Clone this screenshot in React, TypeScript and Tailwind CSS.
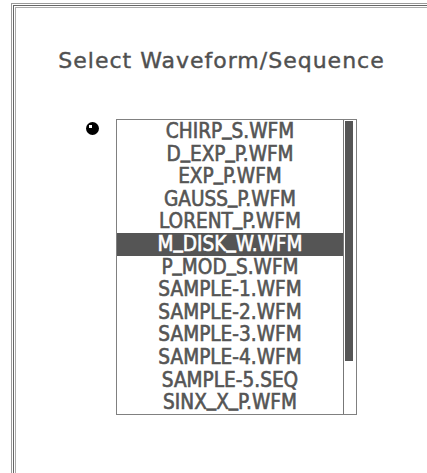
import React from 'react';

const files = [
    'CHIRP_S.WFM',
    'D_EXP_P.WFM',
    'EXP_P.WFM',
    'GAUSS_P.WFM',
    'LORENT_P.WFM',
    'M_DISK_W.WFM',
    'P_MOD_S.WFM',
    'SAMPLE-1.WFM',
    'SAMPLE-2.WFM',
    'SAMPLE-3.WFM',
    'SAMPLE-4.WFM',
    'SAMPLE-5.SEQ',
    'SINX_X_P.WFM',
];

const Bullet = () => (
    <svg width="13" height="13" viewBox="0 0 13 13" className="mt-[3px] shrink-0">
        <circle cx="6.5" cy="6.5" r="6.5" fill="#000"/>
        <rect x="3" y="3" width="3" height="3" fill="#fff"/>
    </svg>
);

// the panel's font sits its underscore on the baseline
const FileName = ({name}: { name: string }) => (
    <>
        {name.split('_').map((part, i) => (
            <React.Fragment key={i}>
                {i > 0 && <span className="relative -top-[4px]">_</span>}
                {part}
            </React.Fragment>
        ))}
    </>
);

export default function App() {
    const selected = 'M_DISK_W.WFM';
    return (
        <div className="h-[473px] w-[427px] overflow-hidden bg-white" style={{fontFamily: '"DejaVu Sans", sans-serif'}}>
            <div className="ml-[11px] mt-[3px] h-[490px] border-l border-t border-[#9a9a9a] pl-px pt-px">
                <div className="h-full border-l border-t border-[#666] pl-px pt-px">
                    <div className="h-full border-l border-t border-[#aaa]">
                        <h1 className="pt-[40px] text-center text-[22px] leading-[26px] tracking-[1px] text-[#505050] [-webkit-text-stroke:0.4px_#505050]">
                            Select Waveform/Sequence
                        </h1>
                        <div className="mt-[45px] flex pl-[70px]">
                            <Bullet/>
                            <div className="ml-[17px] flex border border-[#808080]">
                                <ul className="w-[226px]"
                                    style={{fontFamily: '"DejaVu Sans Condensed", "DejaVu Sans", sans-serif'}}>
                                    {files.map(f => (
                                        <li key={f}
                                            className={`h-[22.6px] text-center text-[20.6px] leading-[22.6px] ${f === selected ? 'bg-[#555] text-white [-webkit-text-stroke:0.6px_#fff]' : 'text-[#555] [-webkit-text-stroke:0.6px_#555]'}`}>
                                            <FileName name={f}/>
                                        </li>
                                    ))}
                                </ul>
                                <div className="w-[13px] border-l border-[#777] pl-px">
                                    <div className="mt-px h-[240px] w-[8px] bg-[#555]"/>
                                </div>
                            </div>
                        </div>
                    </div>
                </div>
            </div>
        </div>
    );
}
